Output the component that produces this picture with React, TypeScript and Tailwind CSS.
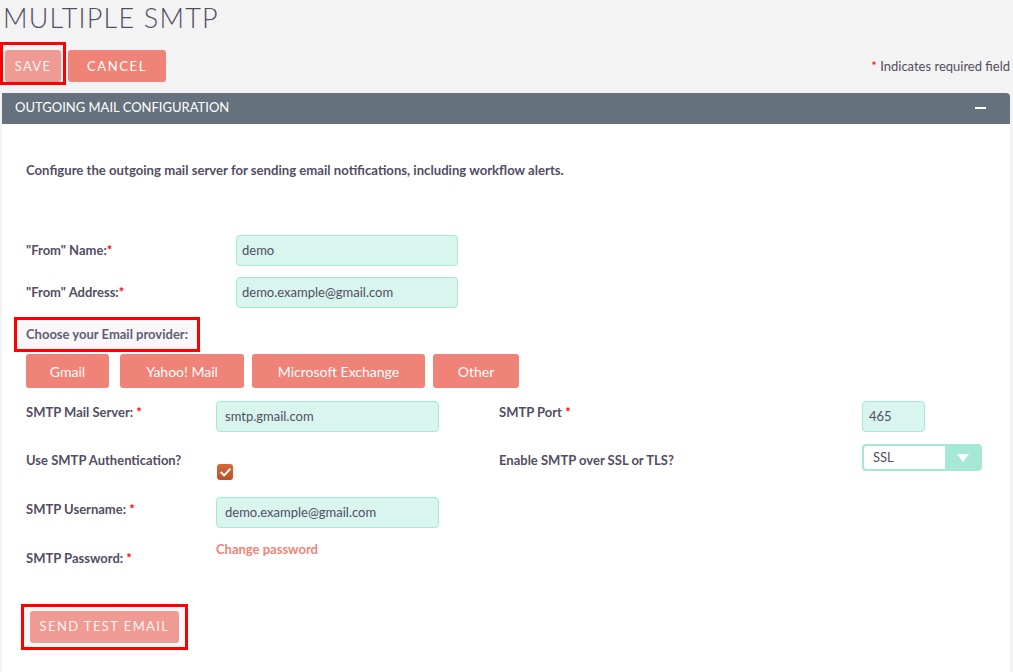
import React from "react";

const Req = () => <span className="text-[#ff0000]">*</span>;

const inputCls =
  "h-[31px] rounded-[4px] border border-[#a5e8d6] bg-[#d8f5ee] flex items-center text-[13px] text-[#534d64]";

export default function App() {
  return (
    <div className="min-h-[672px] bg-[#f3f3f3] font-['Lato','Noto_Sans',sans-serif] text-[#534d64]">
      <div className="px-[3px] pt-[4px]">
        <h1 className="text-[27px] font-light leading-[28px] tracking-[1.2px] text-[#534d64]">MULTIPLE SMTP</h1>
      </div>

      <div className="mt-[18px] flex items-center justify-between pl-[5px] pr-[3px]">
        <div className="flex items-center gap-[7px]">
          <div className="relative">
            <div className="absolute -left-[5px] -top-[8px] h-[43px] w-[66px] border-[3px] border-[#ff0000]" />
            <button className="h-[32px] w-[56px] rounded-[3px] bg-[#ef9a92] pt-[2px] text-[13px] tracking-[1.3px] text-white/90">SAVE</button>
          </div>
          <button className="h-[32px] w-[98px] rounded-[3px] bg-[#f08377] pt-[2px] text-[13px] tracking-[1.6px] text-white">CANCEL</button>
        </div>
        <div className="pt-[2px] text-[13px]">
          <Req /> Indicates required field
        </div>
      </div>

      <div className="ml-[2px] mr-[3px] mt-[11px]">
        <div className="flex h-[31px] items-center justify-between rounded-tr-[4px] bg-[#65717c] pb-[2px] pl-[13px] pr-[24px] text-[13px] text-white">
          <span>OUTGOING MAIL CONFIGURATION</span>
          <span className="block h-[2px] w-[11px] bg-white" />
        </div>
        <div className="h-[548px] bg-white pl-[24px]">
          <p className="pt-[38px] text-[13.15px] font-bold leading-[16px]">
            Configure the outgoing mail server for sending email notifications, including workflow alerts.
          </p>

          <div className="mt-[57px] flex flex-col gap-[11px]">
            <div className="flex items-center">
              <div className="w-[210px] text-[13px] font-bold">"From" Name:<Req /></div>
              <div className={inputCls + " w-[222px] px-[5px]"}>demo</div>
            </div>
            <div className="flex items-center">
              <div className="w-[210px] text-[13px] font-bold">"From" Address:<Req /></div>
              <div className={inputCls + " w-[222px] px-[5px]"}>demo.example@gmail.com</div>
            </div>
          </div>

          <div className="relative mt-[17px] w-fit">
            <div className="absolute -left-[12px] -top-[8px] h-[35px] w-[186px] border-[3px] border-[#ff0000] bg-[#f8f8fa]" />
            <div className="relative text-[13px] font-bold leading-[18px] text-[#625c74]">Choose your Email provider:</div>
          </div>

          <div className="mt-[11px] flex items-center text-[14px] text-white">
            <button className="h-[34px] w-[83px] rounded-[3px] bg-[#f08377]">Gmail</button>
            <button className="ml-[11px] h-[34px] w-[124px] rounded-[3px] bg-[#f08377]">Yahoo! Mail</button>
            <button className="ml-[8px] h-[34px] w-[173px] rounded-[3px] bg-[#f08377]">Microsoft Exchange</button>
            <button className="ml-[8px] h-[34px] w-[86px] rounded-[3px] bg-[#f08377]">Other</button>
          </div>

          <div className="mt-[13px] text-[13px]">
            <div className="flex h-[43px] items-start">
              <div className="w-[190px] pt-[2px] font-bold">SMTP Mail Server: <Req /></div>
              <div className={inputCls + " w-[223px] px-[8px]"}>smtp.gmail.com</div>
              <div className="ml-[60px] w-[363px] pt-[2px] font-bold">SMTP Port <Req /></div>
              <div className={inputCls + " w-[63px] px-[6px]"}>465</div>
            </div>
            <div className="flex h-[53px] items-start">
              <div className="w-[191px] pt-[7px] font-bold">Use SMTP Authentication?</div>
              <div className="mt-[20px] flex h-[16px] w-[16px] items-center justify-center rounded-[3px] bg-gradient-to-b from-[#d46c40] to-[#b94f26]">
                <svg width="11" height="9" viewBox="0 0 11 9">
                  <path d="M1.2 4.6 L4.2 7.4 L9.8 1.4" fill="none" stroke="#fff" strokeWidth="2" strokeLinecap="round" strokeLinejoin="round" />
                </svg>
              </div>
              <div className="ml-[266px] w-[363px] pt-[7px] font-bold">Enable SMTP over SSL or TLS?</div>
              <div className="flex h-[27px] w-[120px] overflow-hidden rounded-[4px] border-2 border-[#a5e8d6] bg-[#a5e8d6]">
                <div className="flex flex-1 items-center rounded-l-[2px] bg-white pl-[9px] text-[13px]">SSL</div>
                <div className="flex w-[35px] items-center justify-center">
                  <svg width="12" height="8" viewBox="0 0 12 8">
                    <path d="M0 0 L12 0 L6 8 Z" fill="#fff" />
                  </svg>
                </div>
              </div>
            </div>
            <div className="flex h-[43px] items-start">
              <div className="w-[190px] pt-[3px] font-bold">SMTP Username: <Req /></div>
              <div className={inputCls + " w-[223px] px-[8px]"}>demo.example@gmail.com</div>
            </div>
            <div className="flex items-start">
              <div className="w-[190px] pt-[9px] font-bold">SMTP Password: <Req /></div>
              <div className="font-bold text-[#f08377]">Change password</div>
            </div>
          </div>

          <div className="relative mt-[42px] ml-[4px] w-fit">
            <div className="absolute -left-[9px] -top-[7px] h-[46px] w-[167px] border-[3px] border-[#ff0000] bg-[#f8f8fa]" />
            <button className="relative h-[32px] w-[149px] rounded-[3px] bg-[#ef9a92] pt-[1px] text-[13px] tracking-[1.4px] text-white/90">SEND TEST EMAIL</button>
          </div>
        </div>
      </div>
    </div>
  );
}
